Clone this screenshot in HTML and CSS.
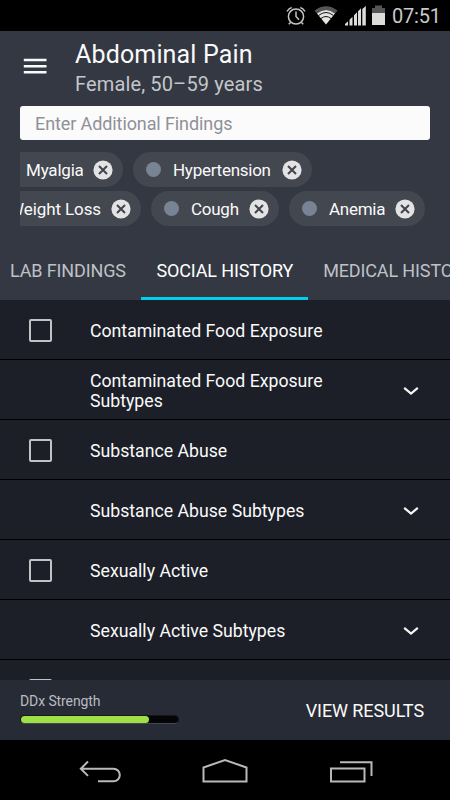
FILE: index.html
```html
<!DOCTYPE html>
<html lang="en">
<head>
<meta charset="utf-8">
<title>Abdominal Pain</title>
<link rel="stylesheet" href="styles.css">
</head>
<body>
<svg class="defs" width="0" height="0">
  <symbol id="remove" viewBox="0 0 20 20"><circle cx="10" cy="10" r="9.6" fill="#e3e3e4"/><path d="M6 6l8 8M14 6l-8 8" stroke="#41444d" stroke-width="2" fill="none"/></symbol>
  <symbol id="chevron" viewBox="0 0 16 10"><path d="M1.200 1.800L8 7.600l6.800-5.800" fill="none" stroke="#f4f4f4" stroke-width="2.200"/></symbol>
</svg>
<div class="statusbar">
  <svg class="status-icons" width="120" height="30" viewBox="0 0 120 30">
    <g fill="none" stroke="#c4c4c4" stroke-width="1.500"><circle cx="26" cy="16.500" r="7.600"/><path d="M26 11.500v5l3 3.200M17 11.500q1.500-3 4.700-4M35 11.500q-1.500-3-4.700-4M20.500 22.500l-1.700 1.800M31.500 22.500l1.700 1.800"/></g>
    <path d="M44.500 10.500Q56 2 67.500 10.500L65 13.500Q56 6.500 47 13.500Z" fill="#555"/>
    <path d="M47 13.500Q56 6.500 65 13.500L56 24.500Z" fill="#e6e6e6"/>
    <path d="M48.500 15.500Q56 9.500 63.500 15.500M51 18.500Q56 14.500 61 18.500" fill="none" stroke="#111" stroke-width="1"/>
    <path d="M75 25.500v-1.500l3-2.800v4.300zM79.500 25.500v-5.800l3-3v8.800zM84 25.500v-10.300l3-3v13.300zM88 25.500v-14.300l3-3v17.300zM92.300 25.500v-16.500l3.500-3v19.500z" fill="#dcdcdc"/>
    <path d="M102 13V8h3V5.500h7V8h3v5z" fill="#555"/><path d="M102 13h13v12h-13z" fill="#dcdcdc"/>
  </svg>
  <span class="clock">07:51</span>
</div>
<header class="header">
  <div class="titlebar">
    <svg class="menu" width="24" height="16" viewBox="0 0 24 16"><path d="M.8 2h22.700M.8 8.200h22.700M.8 14.300h22.700" stroke="#fafafa" stroke-width="2.400"/></svg>
    <div class="titles">
      <h1 class="title">Abdominal Pain</h1>
      <p class="subtitle">Female, 50–59 years</p>
    </div>
  </div>
  <div class="search">Enter Additional Findings</div>
  <div class="chips">
    <div class="chip-row">
      <div class="chip chip-cut myalgia"><span>Myalgia</span><svg class="remove"><use href="#remove"/></svg></div>
      <div class="chip hypertension"><i class="dot"></i><span>Hypertension</span><svg class="remove"><use href="#remove"/></svg></div>
    </div>
    <div class="chip-row">
      <div class="chip chip-cut weight"><span>Weight Loss</span><svg class="remove"><use href="#remove"/></svg></div>
      <div class="chip cough"><i class="dot"></i><span>Cough</span><svg class="remove"><use href="#remove"/></svg></div>
      <div class="chip anemia"><i class="dot"></i><span>Anemia</span><svg class="remove"><use href="#remove"/></svg></div>
    </div>
  </div>
  <nav class="tabs">
    <span class="tab">LAB FINDINGS</span>
    <span class="tab active">SOCIAL HISTORY</span>
    <span class="tab">MEDICAL HISTORY</span>
  </nav>
</header>
<main class="list">
  <div class="row"><i class="check"></i><span class="label">Contaminated Food Exposure</span></div>
  <div class="row"><span class="label">Contaminated Food Exposure Subtypes</span><svg class="chevron"><use href="#chevron"/></svg></div>
  <div class="row"><i class="check"></i><span class="label">Substance Abuse</span></div>
  <div class="row"><span class="label">Substance Abuse Subtypes</span><svg class="chevron"><use href="#chevron"/></svg></div>
  <div class="row"><i class="check"></i><span class="label">Sexually Active</span></div>
  <div class="row"><span class="label">Sexually Active Subtypes</span><svg class="chevron"><use href="#chevron"/></svg></div>
  <div class="row"><i class="check"></i></div>
</main>
<footer class="footer">
  <div class="strength">
    <div class="strength-label">DDx Strength</div>
    <div class="track"><div class="fill"></div></div>
  </div>
  <div class="results">VIEW RESULTS</div>
</footer>
<div class="navbar">
  <svg width="450" height="60" viewBox="0 0 450 60" fill="none" stroke="#b9b9b9" stroke-width="2">
    <path d="M81 28.700h32.500a6.300 6.300 0 0 1 0 12.600H98M88 21.500l-7.200 7.200 7.200 7.200"/>
    <path d="M203.500 41.500V27.500L225 20l21.500 7.500v14z"/>
    <path d="M331 28.500h33.500v13H331zM340 22.300h31.500V36"/>
  </svg>
</div>
</body>
</html>
```
FILE: styles.css
```css
* { box-sizing: border-box; margin: 0; padding: 0; }
body {
  width: 450px; height: 800px; overflow: hidden;
  display: flex; flex-direction: column;
  background: #000; color: #fafafa;
  font-family: Roboto, "Liberation Sans", sans-serif;
  white-space: nowrap;
}
.defs { position: absolute; }
svg { flex: none; }
.statusbar { height: 31px; flex: none; display: flex; justify-content: flex-end; padding-right: 8px; }
.clock { width: 50px; margin-left: 2px; font-size: 20px; line-height: 33px; letter-spacing: -.2px; color: #c9c9c9; }
.header { height: 269px; flex: none; background: #333843; display: flex; flex-direction: column; overflow: hidden; }
.titlebar { display: flex; height: 75px; padding-left: 23px; }
.menu { margin-top: 27px; }
.titles { padding: 8px 0 0 28px; }
.title { font-size: 25px; font-weight: 400; line-height: 32px; letter-spacing: .15px; }
.subtitle { font-size: 20px; line-height: 26px; color: #c4c6ca; letter-spacing: .14px; }
.search {
  height: 34px; margin: 0 20px; padding-left: 15px; border-radius: 3px;
  background: #fbfbfb; color: #8f9197; font-size: 18px; line-height: 36px; letter-spacing: -.1px;
}
.chips { margin: 12px 20px 0; display: flex; flex-direction: column; gap: 4px; }
.chip-row { display: flex; gap: 10px; height: 35px; }
.chip {
  display: flex; align-items: center; justify-content: space-between;
  height: 35px; padding: 0 10px 0 13px; border-radius: 18px;
  background: #43474f; font-size: 17px; line-height: 35px; letter-spacing: -.26px;
}
.chip span { padding-top: 1px; }
.chip .dot + span { margin-left: 12px; margin-right: auto; }
.chip-cut { border-radius: 0 18px 18px 0; overflow: hidden; }
.myalgia { width: 103px; padding-left: 6px; letter-spacing: -.2px; }
.hypertension { width: 179px; }
.weight { width: 121px; justify-content: flex-end; padding-left: 0; gap: 10px; letter-spacing: -.1px; }
.cough { width: 128px; }
.anemia { width: 136px; }
.dot { width: 15px; height: 15px; border-radius: 50%; background: #788394; }
.remove { width: 20px; height: 20px; }
.tabs { display: flex; margin-top: 14px; height: 60px; font-size: 18px; line-height: 61px; letter-spacing: -.13px; color: #bfc1c6; }
.tab { flex: none; height: 60px; padding: 0 15px; }
.tab:first-child { padding-left: 10px; }
.tab.active { padding: 0 15px 0 15.500px; color: #fff; border-bottom: 3px solid #00d0ee; }
.list { height: 380px; flex: none; overflow: hidden; background: #1c1f28; }
.row { display: flex; align-items: center; height: 60px; padding: 0 31px 0 28px; border-bottom: 1px solid #000; }
.check { width: 23px; height: 23px; border: 2px solid #c2c2c6; border-radius: 2px; margin: 1px 38px 0 1px; }
.label { width: 250px; padding-top: 2px; font-size: 17.700px; line-height: 20px; white-space: normal; }
.label:first-child { margin-left: 62px; }
.chevron { width: 16px; height: 10px; margin: 3px 0 0 auto; }
.footer { height: 60px; flex: none; display: flex; justify-content: space-between; padding: 0 26px 0 20px; background: #272b35; }
.strength { padding-top: 11px; }
.strength-label { font-size: 14px; line-height: 20px; letter-spacing: -.1px; color: #b9bbc0; }
.track { width: 159px; height: 9px; margin-top: 4px; border: 1px solid #15171c; border-bottom-color: #444852; border-radius: 5px; background: #050505; }
.fill { width: 128px; height: 7px; border-radius: 4px; background: #9fe047; }
.results { font-size: 18px; line-height: 62px; letter-spacing: -.08px; }
.navbar { height: 60px; flex: none; background: #000; }
```
